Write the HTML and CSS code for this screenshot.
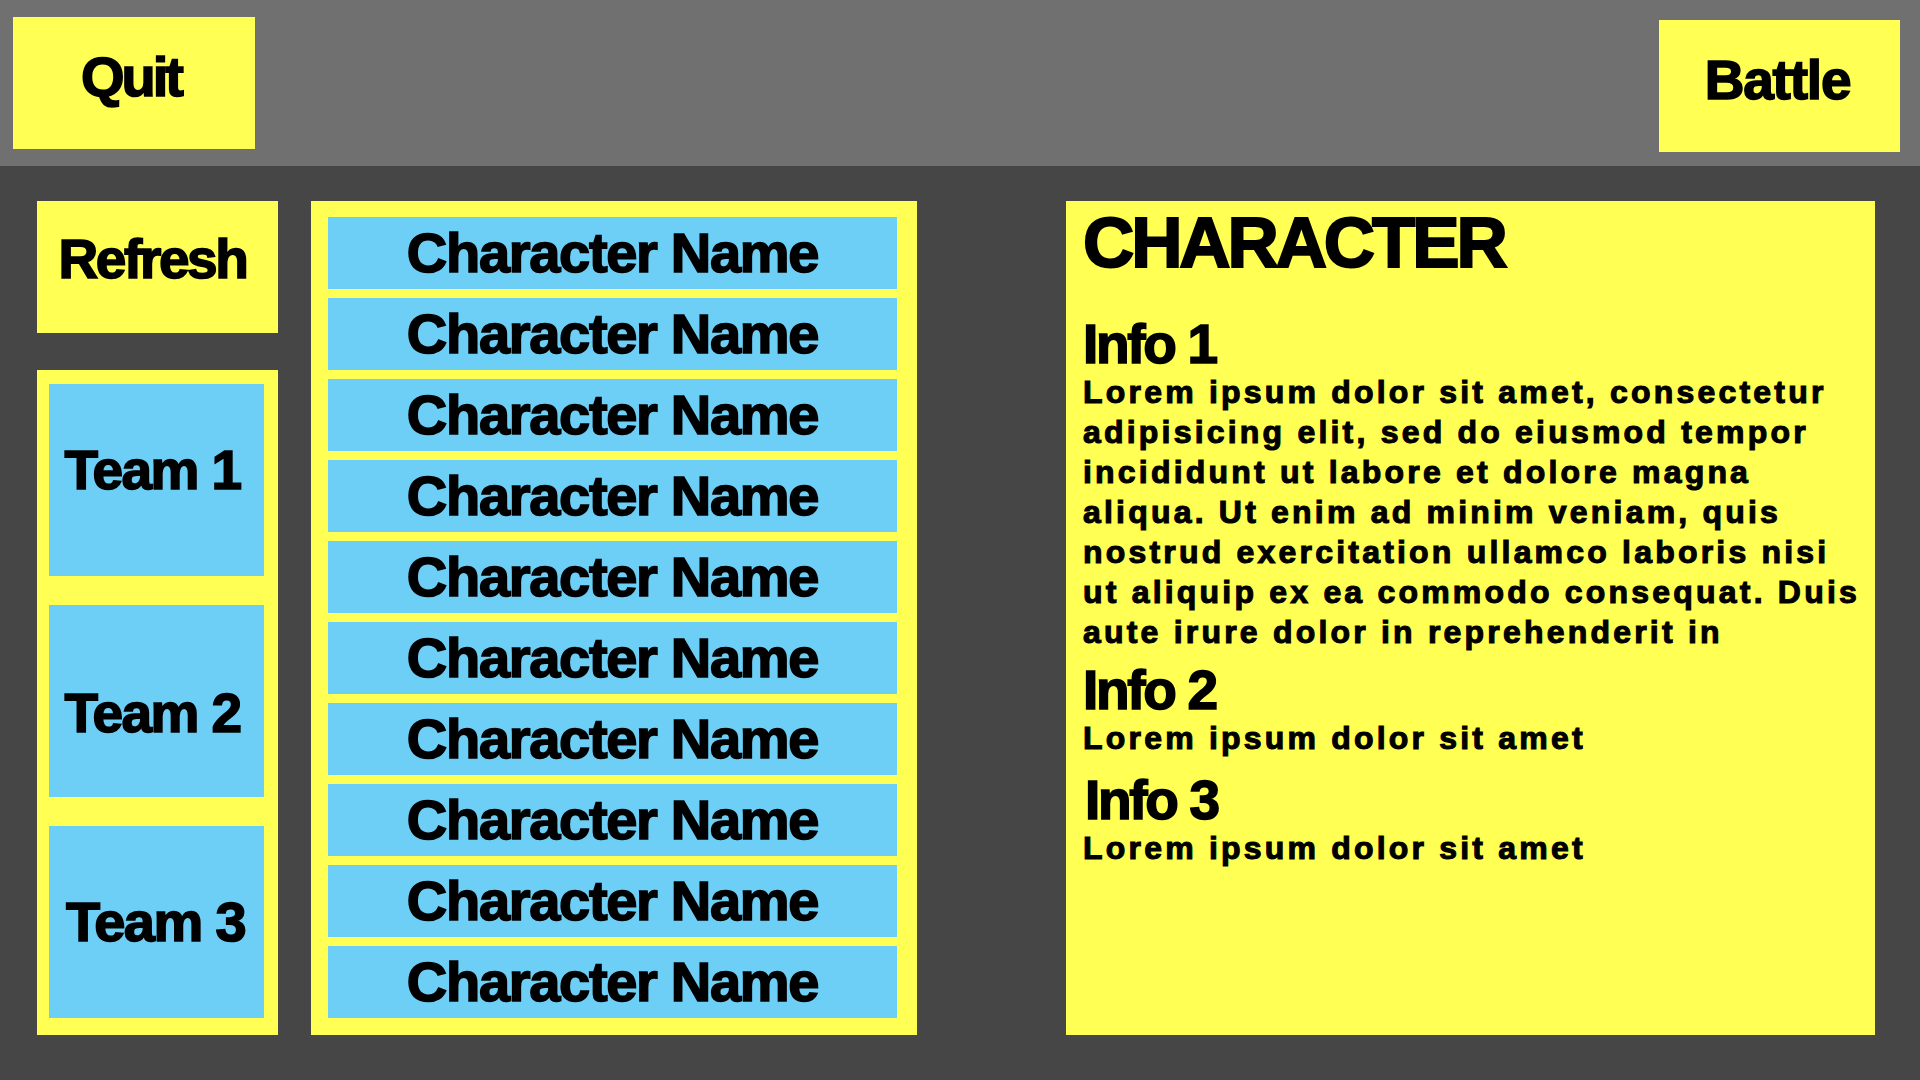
FILE: index.html
```html
<!DOCTYPE html>
<html lang="en">
<head>
<meta charset="utf-8">
<title>Character Select</title>
<link rel="stylesheet" href="styles.css">
</head>
<body>
<header class="topbar">
  <div class="btn btn-quit">Quit</div>
  <div class="btn btn-battle">Battle</div>
</header>
<main class="main">
  <div class="left-col">
    <div class="btn btn-refresh">Refresh</div>
    <div class="teams">
      <div class="team team-1">Team 1</div>
      <div class="team team-2">Team 2</div>
      <div class="team team-3">Team 3</div>
    </div>
  </div>
  <div class="char-list">
    <div class="char-item">Character Name</div>
    <div class="char-item">Character Name</div>
    <div class="char-item">Character Name</div>
    <div class="char-item">Character Name</div>
    <div class="char-item">Character Name</div>
    <div class="char-item">Character Name</div>
    <div class="char-item">Character Name</div>
    <div class="char-item">Character Name</div>
    <div class="char-item">Character Name</div>
    <div class="char-item">Character Name</div>
  </div>
  <section class="info">
    <h1 class="info-title">CHARACTER</h1>
    <h2 class="info-head info-head-first">Info 1</h2>
    <p class="info-text">Lorem ipsum dolor sit amet, consectetur adipisicing elit, sed do eiusmod tempor incididunt ut labore et dolore magna aliqua. Ut enim ad minim veniam, quis nostrud exercitation ullamco laboris nisi ut aliquip ex ea commodo consequat. Duis aute irure dolor in reprehenderit in</p>
    <h2 class="info-head info-head-2">Info 2</h2>
    <p class="info-text">Lorem ipsum dolor sit amet</p>
    <h2 class="info-head info-head-3">Info 3</h2>
    <p class="info-text">Lorem ipsum dolor sit amet</p>
  </section>
</main>
</body>
</html>
```

FILE: styles.css
```css
* {
  box-sizing: border-box;
}

html, body {
  margin: 0;
  padding: 0;
}

body {
  width: 1920px;
  height: 1080px;
  overflow: hidden;
  background: #464646;
  font-family: "Liberation Sans", Arial, sans-serif;
  font-weight: bold;
  color: #000;
}

.topbar {
  height: 166px;
  background: #707070;
  display: flex;
  justify-content: space-between;
  align-items: flex-start;
  padding: 17px 20px 0 13px;
}

.btn {
  background: #ffff54;
  display: flex;
  align-items: center;
  justify-content: center;
  height: 132px;
  font-size: 56px;
  line-height: 56px;
  -webkit-text-stroke: 1.6px #000;
}

.btn-quit {
  width: 242px;
  letter-spacing: -3px;
  padding: 0 6px 12px 0;
}

.btn-battle {
  width: 241px;
  margin-top: 3px;
  font-size: 55px;
  letter-spacing: -1.2px;
  padding: 0 4px 13px 0;
}

.main {
  height: 914px;
  display: flex;
  align-items: stretch;
  gap: 33px;
  padding: 35px 0 45px 37px;
}

.left-col {
  width: 241px;
  display: flex;
  flex-direction: column;
  gap: 37px;
}

.btn-refresh {
  width: 241px;
  font-size: 55px;
  letter-spacing: -2.4px;
  padding: 0 10px 17px 0;
}

.teams {
  flex: 1;
  background: #ffff54;
  display: flex;
  flex-direction: column;
  gap: 29px;
  padding: 14px 14px 17px 12px;
}

.team {
  height: 192px;
  background: #6dcff6;
  display: flex;
  align-items: center;
  justify-content: center;
  font-size: 55px;
  line-height: 56px;
  letter-spacing: -1.6px;
  padding-right: 8px;
  -webkit-text-stroke: 1.6px #000;
}

.team-1 {
  padding-bottom: 20px;
}

.team-2 {
  padding-top: 24px;
}

.team-3 {
  font-size: 56px;
  padding-right: 2px;
}

.char-list {
  width: 606px;
  background: #ffff54;
  display: flex;
  flex-direction: column;
  gap: 9px;
  padding: 16px 20px 17px 17px;
}

.char-item {
  height: 72px;
  background: #6dcff6;
  text-align: center;
  font-size: 56px;
  line-height: 72px;
  letter-spacing: -1.3px;
  white-space: nowrap;
  -webkit-text-stroke: 1.6px #000;
}

.info {
  width: 809px;
  margin-left: 116px;
  background: #ffff54;
  padding: 6px 10px 0 17px;
}

.info-title {
  margin: 0;
  font-size: 71px;
  line-height: 72px;
  letter-spacing: -3.1px;
  -webkit-text-stroke: 2px #000;
}

.info-head {
  margin: 12px 0 0;
  font-size: 55px;
  line-height: 56px;
  letter-spacing: -2.3px;
  -webkit-text-stroke: 1.6px #000;
}

.info-head-first {
  margin-top: 37px;
}

.info-head-2 {
  margin-top: 10px;
}

.info-head-3 {
  margin-top: 14px;
  padding-left: 2px;
}

.info-text {
  margin: 0;
  font-size: 32px;
  line-height: 40px;
  letter-spacing: 3.2px;
  -webkit-text-stroke: 1.1px #000;
}
```
